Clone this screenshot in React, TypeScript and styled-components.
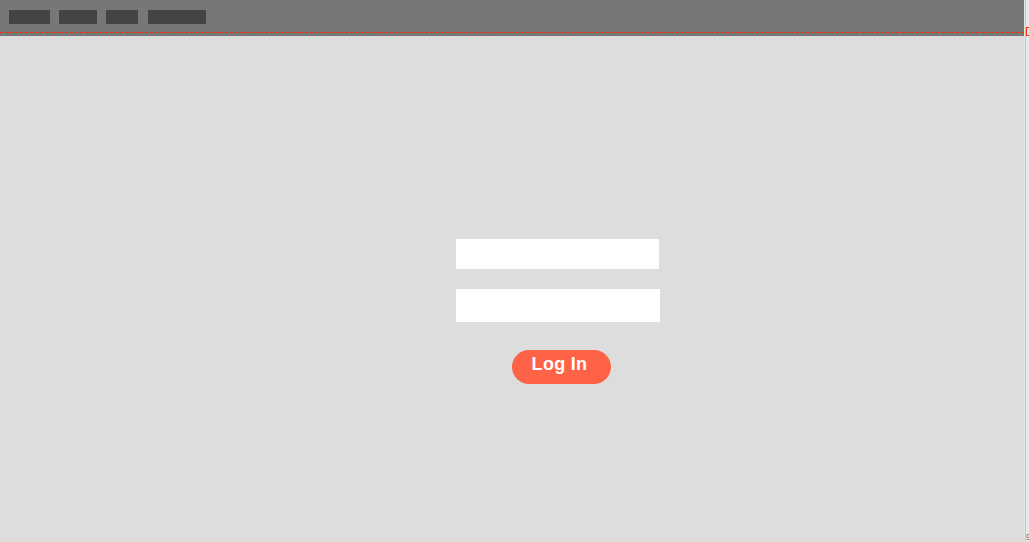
import React from "react";
import styled, { createGlobalStyle } from "styled-components";

const Global = createGlobalStyle`
  html, body { margin: 0; padding: 0; background: #dddddd; overflow: hidden; }
  body { font-family: "Liberation Sans", Arial, sans-serif; }
`;

const Page = styled.div`
  display: flex;
  width: 1029px;
  height: 542px;
`;

const Main = styled.div`
  width: 1024px;
  display: flex;
  flex-direction: column;
`;

const Header = styled.header`
  background: #777777;
  height: 36px;
  box-sizing: border-box;
  padding-top: 10px;
`;

const Nav = styled.nav`
  display: flex;
  align-items: flex-start;
  height: 22px;
  padding-left: 9px;
  border-bottom: 1px dashed #ff2a00;
`;

const NavBlock = styled.div<{ $w: number; $gap: number }>`
  width: ${(p) => p.$w}px;
  height: 14px;
  background: #444444;
  margin-right: ${(p) => p.$gap}px;
`;

const Body = styled.main`
  flex: 1;
  padding-top: 203px;
  padding-left: 456px;
`;

const Form = styled.form`
  display: flex;
  flex-direction: column;
  align-items: flex-start;
`;

const Field = styled.input<{ $w: number; $h: number; $top?: number }>`
  width: ${(p) => p.$w}px;
  height: ${(p) => p.$h}px;
  margin-top: ${(p) => p.$top ?? 0}px;
  box-sizing: border-box;
  border: none;
  background: #ffffff;
  outline: none;
  padding: 0 6px;
`;

const Button = styled.button`
  margin-top: 28px;
  margin-left: 56px;
  width: 99px;
  height: 34px;
  border: none;
  border-radius: 17px;
  background: #ff6347;
  color: #ffffff;
  font-family: "Liberation Sans", Arial, sans-serif;
  font-weight: bold;
  font-size: 18px;
  letter-spacing: 0.3px;
  line-height: 1;
  padding: 0 4px 6px 0;
  cursor: pointer;
`;

const Gutter = styled.div`
  width: 5px;
  position: relative;
  background: #e9e9e9;
  border-left: 1px solid #e4e4e4;
  box-sizing: border-box;
  display: flex;
`;

const GutterLine = styled.div`
  width: 1px;
  background: #c4c4c4;
`;

const Marker = styled.div`
  position: absolute;
  left: 1px;
  top: 27px;
  width: 4px;
  height: 9px;
  box-sizing: border-box;
  border: 1px solid #ff2a00;
  border-right: none;
`;

const Corner = styled.span`
  position: absolute;
  left: 1px;
  bottom: 0px;
  font-size: 9px;
  color: #777;
  line-height: 9px;
`;

export default function App() {
  return (
    <>
      <Global />
      <Page>
        <Main>
          <Header>
            <Nav>
              <NavBlock $w={41} $gap={9} />
              <NavBlock $w={38} $gap={9} />
              <NavBlock $w={32} $gap={10} />
              <NavBlock $w={58} $gap={0} />
            </Nav>
          </Header>
          <Body>
            <Form onSubmit={(e) => e.preventDefault()}>
              <Field $w={203} $h={30} type="text" />
              <Field $w={204} $h={33} $top={20} type="password" />
              <Button type="submit">Log In</Button>
            </Form>
          </Body>
        </Main>
        <Gutter>
          <GutterLine />
          <Marker />
          <Corner>9</Corner>
        </Gutter>
      </Page>
    </>
  );
}
